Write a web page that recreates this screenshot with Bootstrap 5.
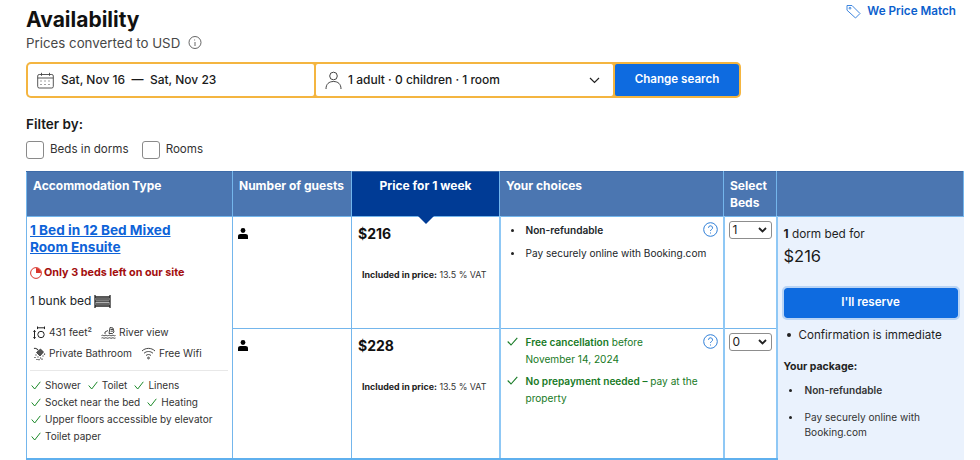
<!DOCTYPE html>
<html lang="en"><head><meta charset="utf-8"><title>Availability</title>
<link href="https://cdn.jsdelivr.net/npm/bootstrap@5.3.0/dist/css/bootstrap.min.css" rel="stylesheet">
<style>
html,body{height:460px;overflow:hidden}
body{font-family:Inter,"Liberation Sans",sans-serif;color:#1a1a1a;font-size:12px;background:#fff}
.pg{width:937px;margin-left:26px;padding-top:7px}
.ttl{font-size:21px;font-weight:700;line-height:26px;margin:0;color:#111}
.sub{font-size:13.3px;line-height:20px;color:#474747}
.pm{color:#0c5fcd;font-weight:600;font-size:11.7px;margin-right:7px;margin-top:-4px;white-space:nowrap;gap:6px}
.sbox{width:715px;height:36px;margin-top:9px;background:#f4b540;border-radius:5px;padding:2px;gap:2px}
.sf{background:#fff;height:32px;font-size:12px;color:#1a1a1a;font-weight:500;padding:0 9px}
.sf1{width:286px;border-radius:3px 2px 2px 3px;gap:7px}
.sf2{width:297px;border-radius:2px}
.usr{margin-right:6px}
.sbtn{flex:1;background:#0e6be0;color:#fff;font-size:11.6px;font-weight:600;border:0;border-radius:2px 3px 3px 2px;padding:0}
.flt{font-size:13.5px;font-weight:600;line-height:18px;margin-top:17px;color:#1a1a1a}
.ck{width:18px;height:18px;border:1px solid #8a8a8a;border-radius:3px;background:#fff;display:block}
.cklab{font-size:11.6px;color:#333;gap:6px;margin-right:13px}
.ftr{margin-top:8px}
.gridt{table-layout:fixed;width:937px;margin:12px 0 0;border-collapse:collapse}
.gridt th,.gridt td{border:1px solid #74b6ec;padding:0;vertical-align:top;box-shadow:none}
.gridt thead th{background:#4b76b1;color:#fff;height:45px;font-size:12px;font-weight:700;padding:5px 0 0 6px;line-height:17px;border-top-color:#3d6ba8}
.gridt thead th.nw{white-space:nowrap}
.gridt thead th.act{background:#003b95;text-align:center;position:relative;padding-left:0}
.act::after{content:"";position:absolute;left:50%;bottom:-8px;margin-left:-8px;border-left:8px solid transparent;border-right:8px solid transparent;border-top:8px solid #003b95}
.gridt tbody{border:0}
.gridt tbody td.c1,.gridt tbody td.r2{border-bottom:3px solid #5fb0ee}
.gridt tbody td.cho{border-left:2px solid #8fc8f5;border-right:2px solid #8fc8f5}
.gridt tbody td.pan{border-left:2px solid #8fc8f5;border-bottom:0}
.gridt td.r1{height:112px}
.gridt td.r2{height:131px}
.gridt td.c1{padding:5px 4px 0 3px}
.rn{display:block;font-size:13.6px;font-weight:700;line-height:17px;color:#0e63d8;text-decoration:underline;margin-bottom:10px}
.left3{font-size:10.8px;font-weight:700;color:#a30e0e;gap:2px;line-height:14px}
.bunk{font-size:12px;gap:3px;margin-top:13px;line-height:16px}
.fac{font-size:10.2px;line-height:21px;color:#333;padding-left:3px;margin-top:13px}
.frow{height:21px;gap:9px}
.fi{gap:3px}
.div1{border-top:1px solid #e8e8e8;margin:6px 0 0;height:7px}
.inc{font-size:10px;line-height:17px;color:#333;padding-left:1px}
.irow{height:17px;gap:7px}
.irow span{display:flex;align-items:center;gap:4px}
.gridt td.gst{padding:7px 6px 0 5px}
.gridt td.prc{padding:8px 6px 0}
.amt{font-size:14px;font-weight:700;line-height:18px;color:#111}
.vat{font-size:8.9px;line-height:12px;margin-top:26px;padding-left:4px;color:#333}
.vat b{font-weight:700;color:#222}
.gridt td.cho{position:relative;font-size:10.1px}
.cho ul{margin:0;list-style:none}
.cho ul.cho1{padding:6px 8px 0 8px;line-height:15px}
.cho1 li{display:flex;gap:9px;margin-bottom:8px}
.dot{width:3px;height:3px;background:#222;border-radius:50%;display:block;margin-top:6px;margin-left:2px;margin-right:3px;flex:none}
.cho ul.grn{color:#177a25;line-height:16.5px;padding:5px 8px 0 6px}
.grn li{display:flex;gap:8px;margin-bottom:6px}
.grn svg{flex:none;margin-top:3px}
.qm{position:absolute;right:5px;top:5px}
.gridt td.sel{padding:4px 0 0 4px}
.minisel{width:43px;height:18px;border:1px solid #8d8d8d;border-radius:3px;background:#fff;font-size:12px;color:#222;line-height:16px;padding:0 0 0 3px;justify-content:space-between}
.gridt td.pan{background:#eaf2fd;border-right:0;font-size:12px}
.pan1{padding:9px 6px 0 6px}
.cnt{line-height:16px;color:#1f1f1f;font-size:11.8px}
.big{font-size:16.5px;line-height:20px;margin-top:4px;color:#1a1a1a}
.resv{display:block;width:100%;height:30px;margin:22px 0 0;padding:0;background:#0e6be0;color:#fff;font-weight:600;font-size:11.6px;border:0;border-radius:3px;outline:2px solid #b9d4f5}
.conf{gap:8px;margin-top:9px;line-height:16px;color:#1f1f1f;font-size:11.6px;align-items:center;padding-left:2px}
.conf i{width:4px;height:4px;border-radius:50%;background:#222;flex:none;margin-left:1px}
.pk{font-size:10.5px;font-weight:700;margin-top:17px;line-height:14px;color:#222}
.pkl{font-size:10.1px;line-height:15px;margin:9px 0 0;padding:0;list-style:none;color:#333}
.pkl li{display:flex;gap:10px}
.pkl li+li{margin-top:12px}
.pkl .dot{margin-left:5px}
.fw6{font-weight:600}
</style></head>
<body>
<div class="pg">
 <div class="d-flex justify-content-between align-items-start">
  <div>
   <h2 class="ttl">Availability</h2>
   <div class="sub d-flex align-items-center gap-2">Prices converted to USD
    <svg width="14" height="14" viewBox="0 0 14 14" fill="none" stroke="#555" stroke-width=".9"><circle cx="7" cy="6.500" r="6"/><path d="M6.200 4h.9M7 6v4"/></svg>
   </div>
  </div>
  <a class="pm d-flex align-items-center text-decoration-none" href="#">
   <svg width="15" height="15" viewBox="0 0 15 15" fill="none" stroke="#3f86de" stroke-width="1"><path d="M1 1.500h5L14 9.500 9.500 14 1 6.200z" stroke-linejoin="round"/><circle cx="4" cy="4.200" r=".9"/></svg>
   We Price Match</a>
 </div>
 <div class="sbox d-flex">
  <div class="sf sf1 d-flex align-items-center">
   <svg width="17" height="17" viewBox="0 0 17 17" fill="none" stroke="#444" stroke-width=".9"><rect x=".7" y="2.500" width="15.600" height="13.500" rx="1.500"/><path d="M.7 6h15.600M4.500 .8v3M12.500 .8v3"/><path d="M3.500 9h1M7.500 9h1M11.500 9h1M3.500 12.500h1M7.500 12.500h1M11.500 12.500h1" stroke-width="1.200"/></svg>
   <span>Sat, Nov 16 &nbsp;—&nbsp; Sat, Nov 23</span>
  </div>
  <div class="sf sf2 d-flex align-items-center">
   <svg class="usr" width="17" height="19" viewBox="0 0 17 19" fill="none" stroke="#444" stroke-width="1"><circle cx="8.500" cy="5" r="3.800"/><path d="M1 18c0-5 3-7.500 7.500-7.500S16 13 16 18"/></svg>
   <span>1 adult · 0 children · 1 room</span>
   <svg class="ms-auto me-1" width="11" height="7" viewBox="0 0 11 7" fill="none" stroke="#222" stroke-width="1.200"><path d="M1 1l4.500 4.500L10 1"/></svg>
  </div>
  <button class="sbtn" type="button">Change search</button>
 </div>
 <div class="flt">Filter by:</div>
 <div class="ftr d-flex align-items-center">
  <label class="cklab d-flex align-items-center"><span class="ck"></span>Beds in dorms</label>
  <label class="cklab d-flex align-items-center"><span class="ck"></span>Rooms</label>
 </div>
 <table class="table gridt">
  <colgroup><col style="width:206px"><col style="width:119px"><col style="width:148px"><col style="width:224px"><col style="width:53px"><col style="width:187px"></colgroup>
  <thead><tr>
   <th class="nw">Accommodation Type</th><th class="nw">Number of guests</th><th class="act">Price for 1 week</th><th>Your choices</th><th>Select Beds</th><th></th>
  </tr></thead>
  <tbody>
  <tr>
   <td class="c1" rowspan="2">
    <a class="rn" href="#">1 Bed in 12 Bed Mixed<br>Room Ensuite</a>
    <div class="left3 d-flex align-items-center">
     <svg width="12" height="12" viewBox="0 0 12 12"><circle cx="6" cy="6" r="5.400" fill="none" stroke="#d9342b" stroke-width="1"/><path d="M6 1v5h5A5 5 0 0 0 6 1z" fill="#d9342b"/></svg>
     Only 3 beds left on our site</div>
    <div class="bunk d-flex align-items-center">1 bunk bed
     <svg width="17" height="13" viewBox="0 0 17 13" fill="none" stroke="#222" stroke-width="1.300"><path d="M1 0v13M16 0v13M1 2h15M1 6.200h15M1 11h15"/><path d="M2 3h13v2.500H2zM2 7.500h13V10H2z" fill="#666" stroke="none"/></svg>
    </div>
    <div class="fac">
     <div class="frow d-flex align-items-center">
      <span class="fi d-flex align-items-center"><svg width="13" height="13" viewBox="0 0 13 13" fill="none" stroke="#222" stroke-width="1"><circle cx="8" cy="8.500" r="3.200"/><path d="M1.500 4.500v8M.4 5.700l1.100-1.300 1.100 1.300M.4 11.300l1.100 1.300 1.100-1.300M4.500 1.800h7M4.500 .5v2.600M11.500 .5v2.600"/></svg>431 feet²</span>
      <span class="fi d-flex align-items-center"><svg width="15" height="13" viewBox="0 0 15 13" fill="none" stroke="#333" stroke-width=".9"><path d="M.5 9.500c1.200-1 2.300 1 3.500 0s2.300 1 3.500 0 2.300 1 3.500 0 2.300 1 3.500 0M.5 12c1.200-1 2.300 1 3.500 0s2.300 1 3.500 0 2.300 1 3.500 0 2.300 1 3.500 0M4 8V6l3-1.500M8 7.500l1-6 3 .5 1 4-1.500 1.500z"/><path d="M9.500 3.500h2.500M9.500 5.200h2.500"/></svg>River view</span>
     </div>
     <div class="frow d-flex align-items-center">
      <span class="fi d-flex align-items-center"><svg width="13" height="14" viewBox="0 0 13 14" fill="none" stroke="#333"><path d="M1 1.500c2-1 3 .5 4 1.500" stroke-width="1.100"/><path d="M3.500 5.500l4-3.500 3 3-3.500 4z" fill="#555" stroke-width=".8"/><path d="M5 9.500v1M7.500 10.500v1M10 8.500v1M3 7.500v1M6 12v1.300M9 11.500v1.300M11.500 6.500v1.200M2 10v1M4 12v1" stroke-width="1.200"/></svg>Private Bathroom</span>
      <span class="fi d-flex align-items-center"><svg width="15" height="13" viewBox="0 0 15 13" fill="none" stroke="#333" stroke-width=".9"><path d="M1 4c3.500-3.500 9.500-3.500 13 0M3 6.300c2.500-2.400 6.500-2.400 9 0M5 8.500c1.400-1.300 3.600-1.300 5 0"/><circle cx="7.500" cy="11" r=".9"/></svg>Free Wifi</span>
     </div>
    </div>
    <div class="div1"></div>
    <div class="inc">
     <div class="irow d-flex">
      <span><svg width="10" height="9" viewBox="0 0 10 9" fill="none" stroke="#1d8a2a" stroke-width="1"><path d="M.7 4.500l3 3.500L9.300 .8"/></svg>Shower</span>
      <span><svg width="10" height="9" viewBox="0 0 10 9" fill="none" stroke="#1d8a2a" stroke-width="1"><path d="M.7 4.500l3 3.500L9.300 .8"/></svg>Toilet</span>
      <span><svg width="10" height="9" viewBox="0 0 10 9" fill="none" stroke="#1d8a2a" stroke-width="1"><path d="M.7 4.500l3 3.500L9.300 .8"/></svg>Linens</span>
     </div>
     <div class="irow d-flex">
      <span><svg width="10" height="9" viewBox="0 0 10 9" fill="none" stroke="#1d8a2a" stroke-width="1"><path d="M.7 4.500l3 3.500L9.300 .8"/></svg>Socket near the bed</span>
      <span><svg width="10" height="9" viewBox="0 0 10 9" fill="none" stroke="#1d8a2a" stroke-width="1"><path d="M.7 4.500l3 3.500L9.300 .8"/></svg>Heating</span>
     </div>
     <div class="irow d-flex"><span><svg width="10" height="9" viewBox="0 0 10 9" fill="none" stroke="#1d8a2a" stroke-width="1"><path d="M.7 4.500l3 3.500L9.300 .8"/></svg>Upper floors accessible by elevator</span></div>
     <div class="irow d-flex"><span><svg width="10" height="9" viewBox="0 0 10 9" fill="none" stroke="#1d8a2a" stroke-width="1"><path d="M.7 4.500l3 3.500L9.300 .8"/></svg>Toilet paper</span></div>
    </div>
   </td>
   <td class="gst r1"><svg width="10" height="11" viewBox="0 0 10 11" fill="#000"><circle cx="5" cy="2.500" r="2.400"/><path d="M0 11V8.200C0 6.800 1 6 2.500 6h5C9 6 10 6.800 10 8.200V11z"/></svg></td>
   <td class="prc r1"><div class="amt">$216</div><div class="vat"><b>Included in price:</b> 13.5 % VAT</div></td>
   <td class="cho r1">
    <svg class="qm" width="15" height="15" viewBox="0 0 15 15" fill="none" stroke="#2f7fd8" stroke-width="1"><circle cx="7.500" cy="7.500" r="6.800"/><path d="M5.500 5.800a2 2 0 1 1 3 1.700c-.7.400-1 .8-1 1.500M7.500 10.500v1"/></svg>
    <ul class="cho1"><li><span class="dot"></span><span class="fw6">Non-refundable</span></li><li><span class="dot"></span><span>Pay securely online with Booking.com</span></li></ul>
   </td>
   <td class="sel r1"><div class="minisel d-flex align-items-center">1<svg class="me-1" width="9" height="6" viewBox="0 0 9 6" fill="none" stroke="#222" stroke-width="1.800"><path d="M1 1l3.500 3.500L8 1"/></svg></div></td>
   <td class="pan" rowspan="2"><div class="pan1">
    <div class="cnt"><b>1</b> dorm bed for</div>
    <div class="big">$216</div>
    <button class="resv" type="button">I'll reserve</button>
    <div class="conf d-flex"><i></i>Confirmation is immediate</div>
    <div class="pk">Your package:</div>
    <ul class="pkl"><li><span class="dot"></span><span class="fw6">Non-refundable</span></li><li><span class="dot"></span><span>Pay securely online with Booking.com</span></li></ul>
   </div></td>
  </tr>
  <tr>
   <td class="gst r2"><svg width="10" height="11" viewBox="0 0 10 11" fill="#000"><circle cx="5" cy="2.500" r="2.400"/><path d="M0 11V8.200C0 6.800 1 6 2.500 6h5C9 6 10 6.800 10 8.200V11z"/></svg></td>
   <td class="prc r2"><div class="amt">$228</div><div class="vat"><b>Included in price:</b> 13.5 % VAT</div></td>
   <td class="cho r2">
    <svg class="qm" width="15" height="15" viewBox="0 0 15 15" fill="none" stroke="#2f7fd8" stroke-width="1"><circle cx="7.500" cy="7.500" r="6.800"/><path d="M5.500 5.800a2 2 0 1 1 3 1.700c-.7.400-1 .8-1 1.500M7.500 10.500v1"/></svg>
    <ul class="grn">
     <li><svg width="11" height="9" viewBox="0 0 11 9" fill="none" stroke="#177a25" stroke-width="1.100"><path d="M.7 4.500l3.300 3.500L10.300 .8"/></svg><span><span class="fw6">Free cancellation</span> before<br>November 14, 2024</span></li>
     <li><svg width="11" height="9" viewBox="0 0 11 9" fill="none" stroke="#177a25" stroke-width="1.100"><path d="M.7 4.500l3.300 3.500L10.300 .8"/></svg><span><span class="fw6">No prepayment needed –</span> pay at the property</span></li>
    </ul>
   </td>
   <td class="sel r2"><div class="minisel d-flex align-items-center">0<svg class="me-1" width="9" height="6" viewBox="0 0 9 6" fill="none" stroke="#222" stroke-width="1.800"><path d="M1 1l3.500 3.500L8 1"/></svg></div></td>
  </tr>
  </tbody>
 </table>
</div>
</body></html>
